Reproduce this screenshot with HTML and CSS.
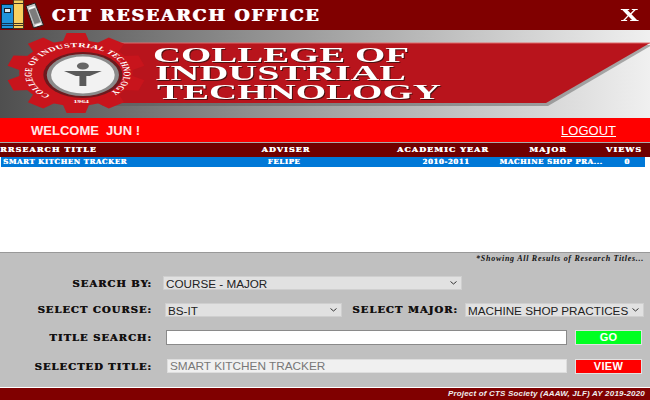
FILE: index.html
```html
<!DOCTYPE html>
<html lang="en">
<head>
<meta charset="utf-8">
<title>CIT Research Office</title>
<link rel="stylesheet" href="styles.css">
</head>
<body>
<div class="app">
  <header class="titlebar">
    <svg class="books" width="46" height="30" viewBox="0 0 46 30">
      <rect x="1.500" y="4.500" width="12" height="24" fill="#1f93dc" stroke="#123"/>
      <rect x="4.500" y="8.500" width="6" height="4" fill="#dfe8ee" stroke="#123"/>
      <path d="M2 23.500h11M2 25.500h11" stroke="#135"/>
      <rect x="13.500" y="0" width="10" height="28.500" fill="#f8d060" stroke="#432"/>
      <path d="M14 3.500h9M14 23.500h9M14 25.500h9" stroke="#432"/>
      <path d="M26 6l9-3 8.500 22-10 3z" fill="#c4c4c4" stroke="#222"/>
      <path d="M29 10l6-2 5.500 14-6 2z" fill="#7c7c7c"/>
      <path d="M28.500 8l6-2 .5 1.500-6 2zM35 25l6-2 .5 1.500-6 2z" fill="#fff"/>
    </svg>
    <h1 class="app-title">CIT RESEARCH OFFICE</h1>
    <span class="close">X</span>
  </header>

  <svg class="banner" width="650" height="88" viewBox="0 0 650 88">
    <defs>
      <linearGradient id="bg" x1="0" x2="1" y1="0" y2="0">
        <stop offset="0" stop-color="#4f4f4f"/>
        <stop offset=".5" stop-color="#a2a2a2"/>
        <stop offset="1" stop-color="#f0f0f0"/>
      </linearGradient>
      <path id="ring" d="M-14 23A26.800 26.800 0 1 1 16 23"/>
      <path id="tooth" d="M-8 -30L-5.500 -40H5.500L8 -30Z" fill="#c8141c"/>
    </defs>
    <rect width="650" height="88" fill="url(#bg)"/>
    <path d="M100 13H650L546 74H100Z" fill="#555" opacity=".45" transform="translate(2 2)"/>
    <path d="M100 13H650L546 73H100Z" fill="#b8141c"/>
    <path d="M100 13H650" stroke="#e06a6a"/>
    <g transform="translate(76 43) scale(1.72 1)">
      <circle r="33" fill="#c8141c"/>
      <use href="#tooth"/>
      <use href="#tooth" transform="rotate(36)"/>
      <use href="#tooth" transform="rotate(72)"/>
      <use href="#tooth" transform="rotate(108)"/>
      <use href="#tooth" transform="rotate(144)"/>
      <use href="#tooth" transform="rotate(180)"/>
      <use href="#tooth" transform="rotate(216)"/>
      <use href="#tooth" transform="rotate(252)"/>
      <use href="#tooth" transform="rotate(288)"/>
      <use href="#tooth" transform="rotate(324)"/>
      <text class="ring-text"><textPath href="#ring" textLength="130" startOffset="1">COLLEGE OF INDUSTRIAL TECHNOLOGY</textPath></text>
      <text class="ring-year" text-anchor="middle" x="3" y="30">1964</text>
      <circle cx="4" cy="2" r="23" fill="#6c1a1e"/>
      <circle cx="4" cy="2" r="21" fill="#8b8b8b"/>
      <circle cx="4" cy="2" r="18.500" fill="#f2f2f2"/>
      <circle cx="4" cy="-7" r="3.500" fill="#666"/>
      <path d="M-7 -2H15L8 3H6V13H2V3H0Z" fill="#5a5a5a"/>
    </g>
    <g class="banner-text">
      <text x="153" y="32" textLength="256" lengthAdjust="spacingAndGlyphs">COLLEGE OF</text>
      <text x="155" y="50" textLength="251" lengthAdjust="spacingAndGlyphs">INDUSTRIAL</text>
      <text x="157" y="69" textLength="284" lengthAdjust="spacingAndGlyphs">TECHNOLOGY</text>
    </g>
  </svg>

  <div class="welcome">
    <span class="welcome-text">WELCOME &nbsp;JUN !</span>
    <a class="logout" href="#">LOGOUT</a>
  </div>

  <section class="results">
    <div class="grid-row head">
      <span class="left">RRSEARCH TITLE</span><span>ADVISER</span><span>ACADEMIC YEAR</span><span>MAJOR</span><span>VIEWS</span>
    </div>
    <div class="grid-row selected">
      <span class="left">SMART KITCHEN TRACKER</span><span class="shift">FELIPE</span><span>2010-2011</span><span>MACHINE SHOP PRA...</span><span>0</span>
    </div>
  </section>

  <section class="panel">
    <p class="note">*Showing All Results of Research Titles...</p>
    <div class="form-row row-search">
      <label class="label">SEARCH BY:</label>
      <select class="field select-by"><option>COURSE - MAJOR</option></select>
    </div>
    <div class="form-row row-course">
      <label class="label">SELECT COURSE:</label>
      <select class="field select-course"><option>BS-IT</option></select>
      <label class="label label-major">SELECT MAJOR:</label>
      <select class="field select-major"><option>MACHINE SHOP PRACTICES</option></select>
    </div>
    <div class="form-row row-title">
      <label class="label">TITLE SEARCH:</label>
      <input class="text-input" type="text">
      <button class="btn go" type="button">GO</button>
    </div>
    <div class="form-row row-selected">
      <label class="label">SELECTED TITLE:</label>
      <input class="text-input readonly" type="text" value="SMART KITCHEN TRACKER" readonly>
      <button class="btn view" type="button">VIEW</button>
    </div>
  </section>

  <footer class="footer">Project of CTS Society (AAAW, JLF) AY 2019-2020</footer>
</div>
</body>
</html>
```
FILE: styles.css
```css
* { box-sizing: border-box; }
html, body { margin: 0; padding: 0; }
body { width: 650px; height: 400px; overflow: hidden; background: #fff; }
.app { width: 650px; height: 400px; display: flex; flex-direction: column; }

.titlebar { height: 30px; flex: none; display: flex; align-items: center; background: #800000; padding-right: 13px; }
.books { flex: none; }
.app-title { margin: 0 0 0 6px; flex: 1; color: #fff; font: 700 17.500px/30px "DejaVu Serif", serif; letter-spacing: 1.750px; text-shadow: .6px 0 0 #cdbcff, -.6px 0 0 #ffd9a0; }
.close { color: #fff; font: 700 17px/30px "DejaVu Serif", serif; transform: scaleX(1.35); margin-right: 1px; }

.banner { display: block; flex: none; }
.banner-text text { fill: #fff; font: 700 21px "Liberation Serif", serif; filter: drop-shadow(1px 1px 0 #4a1010); }
.ring-text { fill: #fff; font: 700 6px "Liberation Serif", serif; }
.ring-year { fill: #fff; font: 700 4.500px "Liberation Serif", serif; }

.welcome { height: 24px; flex: none; background: #f00; display: flex; align-items: center; justify-content: space-between; padding: 0 34px 0 31px; font: 700 13px "Liberation Sans", sans-serif; color: #ffe6e6; }
.logout { color: #fff; font-weight: 400; font-size: 13px; text-decoration: underline; }

.results { flex: 1; background: #fff; border-top: 1px solid #aaa; }
.grid-row { display: grid; grid-template-columns: 178px 216px 98px 112px 40px; width: 645px; text-align: center; font: 700 8px "DejaVu Serif", serif; letter-spacing: 1.050px; color: #fff; white-space: nowrap; text-shadow: .4px 0 0 #fff; }
.grid-row .left { text-align: left; }
.head { height: 14px; line-height: 13px; background: #700000; width: 650px; }
.selected { height: 10px; line-height: 10px; background: #0078d7; margin-left: 1px; padding-left: 2px; width: 644px; font-size: 7px; letter-spacing: .58px; }
.shift { padding-right: 10px; }

.panel { height: 135px; flex: none; background: #c0c0c0; border-top: 1px solid #999; display: flex; flex-direction: column; }
.note { margin: 0; height: 23px; padding: 1px 6px 0 0; text-align: right; font: italic 700 8px/10px "Liberation Serif", serif; letter-spacing: .72px; color: #111; }
.form-row { display: flex; align-items: center; }
.row-search { height: 14px; margin-bottom: 12px; }
.row-course { height: 15px; margin-bottom: 12px; }
.row-title { height: 16px; margin-bottom: 13px; }
.row-selected { height: 16px; }
.label { width: 152px; flex: none; text-align: right; font: 700 10px "DejaVu Serif", serif; letter-spacing: 1px; color: #111; white-space: nowrap; text-shadow: .5px 0 0 #211; }
.field { height: 14px; padding: 0 0 0 2px; border: 1px solid #cfcfcf; border-radius: 0; appearance: none; background: #e1e1e1 url("data:image/svg+xml,%3Csvg xmlns='http://www.w3.org/2000/svg' width='7' height='4'%3E%3Cpath d='M.5.5l3 2.500 3-2.500' fill='none' stroke='%23333'/%3E%3C/svg%3E") no-repeat right 4px center; color: #222; font: 400 11.700px "Liberation Sans", sans-serif; }
.select-by { width: 299px; margin-left: 11px; }
.select-course { width: 177px; margin-left: 13px; }
.label-major { width: 107px; margin-left: 9px; }
.select-major { width: 179px; margin-left: 7px; }
.text-input { width: 401px; height: 15px; margin-left: 14px; padding: 0 2px; border: 1px solid #8a8a8a; background: #fff; font: 400 11.800px "Liberation Sans", sans-serif; }
.readonly { margin-left: 15px; width: 400px; height: 14px; border: 1px solid #dedede; background: #f0f0f0; color: #777; }
.btn { width: 67px; height: 15px; margin-left: 8px; padding: 0; border: 1px solid #e2e2e2; color: #fff; font: 700 11px/11px "Liberation Sans", sans-serif; letter-spacing: .3px; }
.go { background: #00ff21; }
.view { background: #f00; }

.footer { height: 12px; flex: none; margin-top: 1px; background: #800000; color: #eee; text-align: right; padding-right: 5px; font: italic 700 8px/12px "Liberation Sans", sans-serif; letter-spacing: .18px; }
```
